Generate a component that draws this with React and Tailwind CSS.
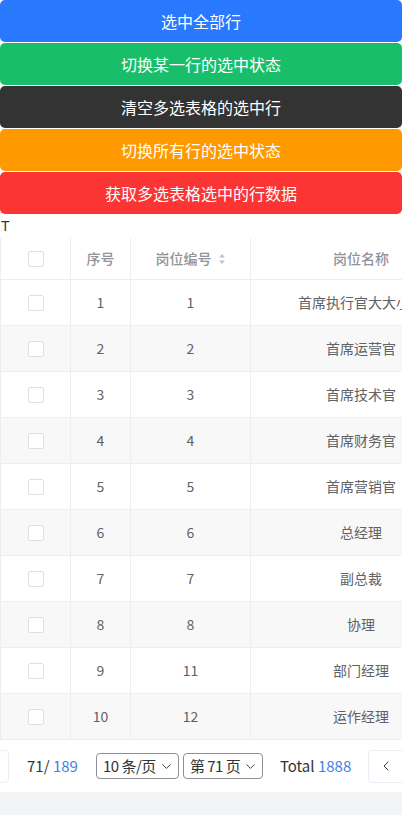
import { ChevronDown, ChevronLeft } from 'lucide-react'

const BUTTONS = [
  { label: '选中全部行', bg: 'bg-[#2979ff]' },
  { label: '切换某一行的选中状态', bg: 'bg-[#19be6b]' },
  { label: '清空多选表格的选中行', bg: 'bg-[#333333]' },
  { label: '切换所有行的选中状态', bg: 'bg-[#ff9900]' },
  { label: '获取多选表格选中的行数据', bg: 'bg-[#fa3534]' },
]

const ROWS = [
  [1, 1, '首席执行官大大小小'],
  [2, 2, '首席运营官'],
  [3, 3, '首席技术官'],
  [4, 4, '首席财务官'],
  [5, 5, '首席营销官'],
  [6, 6, '总经理'],
  [7, 7, '副总裁'],
  [8, 8, '协理'],
  [9, 11, '部门经理'],
  [10, 12, '运作经理'],
]

const font = { fontFamily: '"Noto Sans CJK SC", "Noto Sans", sans-serif' }

function Checkbox() {
  return <span className="block w-[16px] h-[16px] rounded-[2px] border border-[#dcdfe6] bg-white" />
}

function SortIcon() {
  return (
    <svg width="8" height="12" viewBox="0 0 8 12" className="ml-[6px]">
      <path d="M4 1 L7 4.5 L1 4.5 Z" fill="#c0c4cc" />
      <path d="M4 11 L7 7.5 L1 7.5 Z" fill="#c0c4cc" />
    </svg>
  )
}

export default function App() {
  return (
    <div className="w-[402px] h-[815px] overflow-hidden bg-white" style={font}>
      {/* Action buttons */}
      <div className="flex flex-col gap-[1px]">
        {BUTTONS.map(b => (
          <div key={b.label} className={`h-[42px] rounded-[5px] flex items-center justify-center text-white text-[16px] ${b.bg}`}>
            {b.label}
          </div>
        ))}
      </div>

      <div className="h-[24px] pl-[1px] pt-[2px] text-[14px] leading-[20px] text-[#333]" style={{ fontFamily: '"Liberation Sans", sans-serif' }}>T</div>

      {/* Table */}
      <div className="overflow-hidden border-l border-[#ebeef5]">
        <div className="w-[470px]">
          <div className="flex h-[42px] border-b border-[#ebeef5] text-[14px] text-[#909399] font-medium">
            <div className="w-[70px] flex items-center justify-center border-r border-[#ebeef5]"><Checkbox /></div>
            <div className="w-[60px] flex items-center justify-center border-r border-[#ebeef5]">序号</div>
            <div className="w-[120px] flex items-center justify-center border-r border-[#ebeef5]">岗位编号<SortIcon /></div>
            <div className="w-[220px] flex items-center justify-center">岗位名称</div>
          </div>
          {ROWS.map(([idx, code, name], i) => (
            <div key={idx} className={`flex h-[46px] border-b border-[#ebeef5] text-[14px] text-[#606266] ${i % 2 === 1 ? 'bg-[#f8f8f8]' : 'bg-white'}`}>
              <div className="w-[70px] flex items-center justify-center border-r border-[#ebeef5]"><Checkbox /></div>
              <div className="w-[60px] flex items-center justify-center border-r border-[#ebeef5]">{idx}</div>
              <div className="w-[120px] flex items-center justify-center border-r border-[#ebeef5]">{code}</div>
              <div className="w-[220px] flex items-center justify-center whitespace-nowrap">{name}</div>
            </div>
          ))}
        </div>
      </div>

      {/* Pagination */}
      <div className="h-[52px] flex items-center overflow-hidden text-[15px] text-[#333] whitespace-nowrap">
        <div className="ml-[-26px] w-[35px] h-[33px] shrink-0 rounded-[4px] border border-[#ebeef5] bg-white" />
        <span className="ml-[18px]">71/ <span className="text-[#3a83e6]">189</span></span>
        <div className="ml-[18px] w-[83px] h-[26px] shrink-0 pl-[6px] pr-[4px] flex items-center justify-between rounded-[4px] border border-[#909090]">
          <span className="tracking-[-0.5px]">10 条/页</span><ChevronDown size={15} strokeWidth={1.5} />
        </div>
        <div className="ml-[4px] w-[80px] h-[26px] shrink-0 pl-[6px] pr-[4px] flex items-center justify-between rounded-[4px] border border-[#909090]">
          <span className="tracking-[-0.5px]">第 71 页</span><ChevronDown size={15} strokeWidth={1.5} />
        </div>
        <span className="ml-[17px]">Total <span className="text-[#3a83e6]">1888</span></span>
        <div className="ml-[17px] w-[40px] h-[33px] shrink-0 flex items-center justify-center rounded-[4px] border border-[#ebeef5] bg-white">
          <ChevronLeft size={16} strokeWidth={1.5} className="mr-[4px]" />
        </div>
      </div>
      <div className="h-[40px] bg-[#f3f4f6]" />
    </div>
  )
}
